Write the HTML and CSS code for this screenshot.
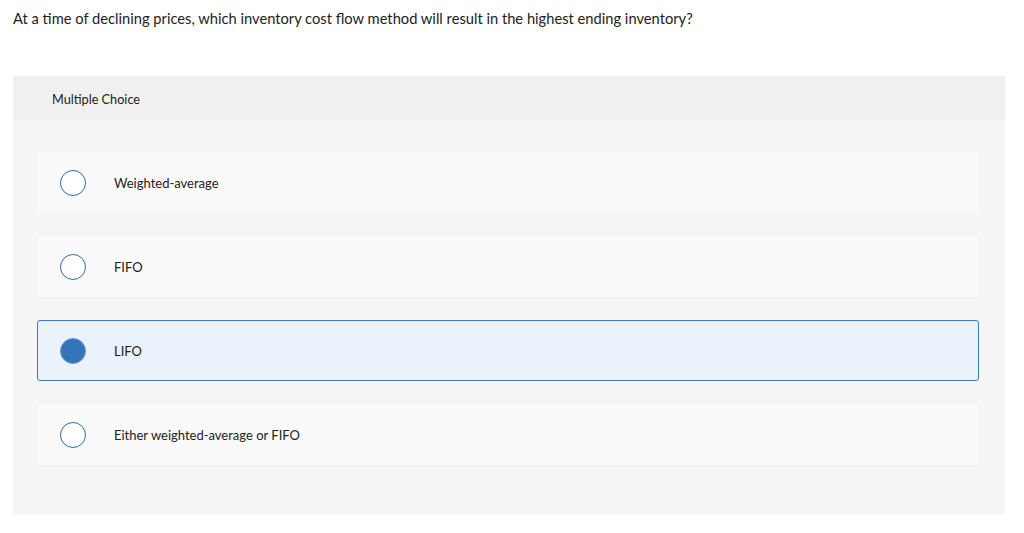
FILE: index.html
```html
<!DOCTYPE html>
<html>
<head>
<meta charset="utf-8">
<link rel="stylesheet" href="styles.css">
</head>
<body>
<div class="page">
  <p class="question">At a time of declining prices, which inventory cost flow method will result in the highest ending inventory?</p>
  <div class="panel">
    <div class="panel-head">Multiple Choice</div>
    <div class="options">
      <div class="option"><span class="radio"></span><span class="label">Weighted-average</span></div>
      <div class="option"><span class="radio"></span><span class="label">FIFO</span></div>
      <div class="option selected"><span class="radio"></span><span class="label">LIFO</span></div>
      <div class="option"><span class="radio"></span><span class="label">Either weighted-average or FIFO</span></div>
    </div>
  </div>
</div>
</body>
</html>
```
FILE: styles.css
```css
html, body { margin: 0; padding: 0; background: #fff; }
body { font-family: "Lato", "Liberation Sans", sans-serif; color: #222; }
.page { padding: 0 19px 0 13px; }
.question { margin: 0; padding-top: 9px; font-size: 14.7px; line-height: 18px; height: 67px; }
.panel { background: #f5f5f5; border-radius: 2px; height: 439px; }
.panel-head { background: #f0f0f0; height: 45px; display: flex; align-items: center; padding-left: 39px; font-size: 12.7px; }
.options { padding: 31px 26px 0 24px; display: flex; flex-direction: column; gap: 23px; }
.option { height: 61px; background: #fafafa; border-radius: 3px; display: flex; align-items: center; box-sizing: border-box; padding-left: 23px; font-size: 13px; }
.option.selected { background: #eaf2fb; border: 1px solid #3f7bc4; height: 61px; padding-left: 22px; }
.radio { width: 26px; height: 26px; border: 1.3px solid #2f6aa5; border-radius: 50%; box-sizing: border-box; background: #fff; flex: none; }
.selected .radio { background: #3574b8; border-color: #6a98cc; }
.label { margin-left: 28px; }
```
